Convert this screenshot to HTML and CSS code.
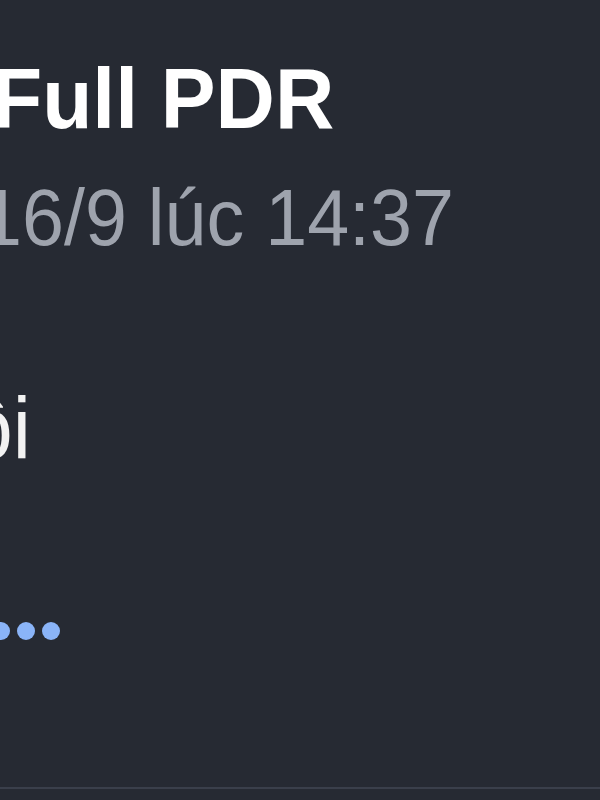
FILE: index.html
```html
<!DOCTYPE html>
<html lang="vi">
<head>
<meta charset="utf-8">
<link rel="stylesheet" href="styles.css">
</head>
<body>
<main class="post">
  <h1 class="title">Full PDR</h1>
  <div class="date">16/9 lúc 14:37</div>
  <p class="text">rồi</p>
  <div class="dots"><span class="dot"></span><span class="dot"></span><span class="dot"></span></div>
  <div class="divider"></div>
</main>
</body>
</html>
```
FILE: styles.css
```css
html {
  background: #262a33;
}
body {
  margin: 0;
  padding: 0;
  font-family: "Liberation Sans", Arial, sans-serif;
}
.post {
  height: 800px;
  overflow: hidden;
  padding-top: 48px;
  box-sizing: border-box;
  display: flex;
  flex-direction: column;
}
.title, .date, .text {
  margin: 0;
  white-space: nowrap;
  transform-origin: 0 0;
}
.title {
  margin-left: -8px;
  font-size: 86px;
  line-height: 100px;
  height: 100px;
  font-weight: 700;
  color: #ffffff;
  transform: scaleX(0.955);
}
.date {
  margin-top: 25px;
  margin-left: -20px;
  font-size: 79px;
  line-height: 90px;
  height: 90px;
  color: #9ea3ad;
  transform: scaleX(0.955);
}
.text {
  margin-top: 115px;
  margin-left: -60px;
  font-size: 88px;
  line-height: 100px;
  height: 100px;
  color: #f2f2f2;
  transform: scaleX(0.93);
}
.dots {
  margin-top: 144px;
  margin-left: -8px;
  display: flex;
  gap: 7px;
  height: 18px;
}
.dot {
  width: 18px;
  height: 18px;
  border-radius: 50%;
  background: #8ab4f8;
}
.divider {
  margin-top: 147px;
  height: 2px;
  flex: none;
  background: #3a3f4b;
}
```
